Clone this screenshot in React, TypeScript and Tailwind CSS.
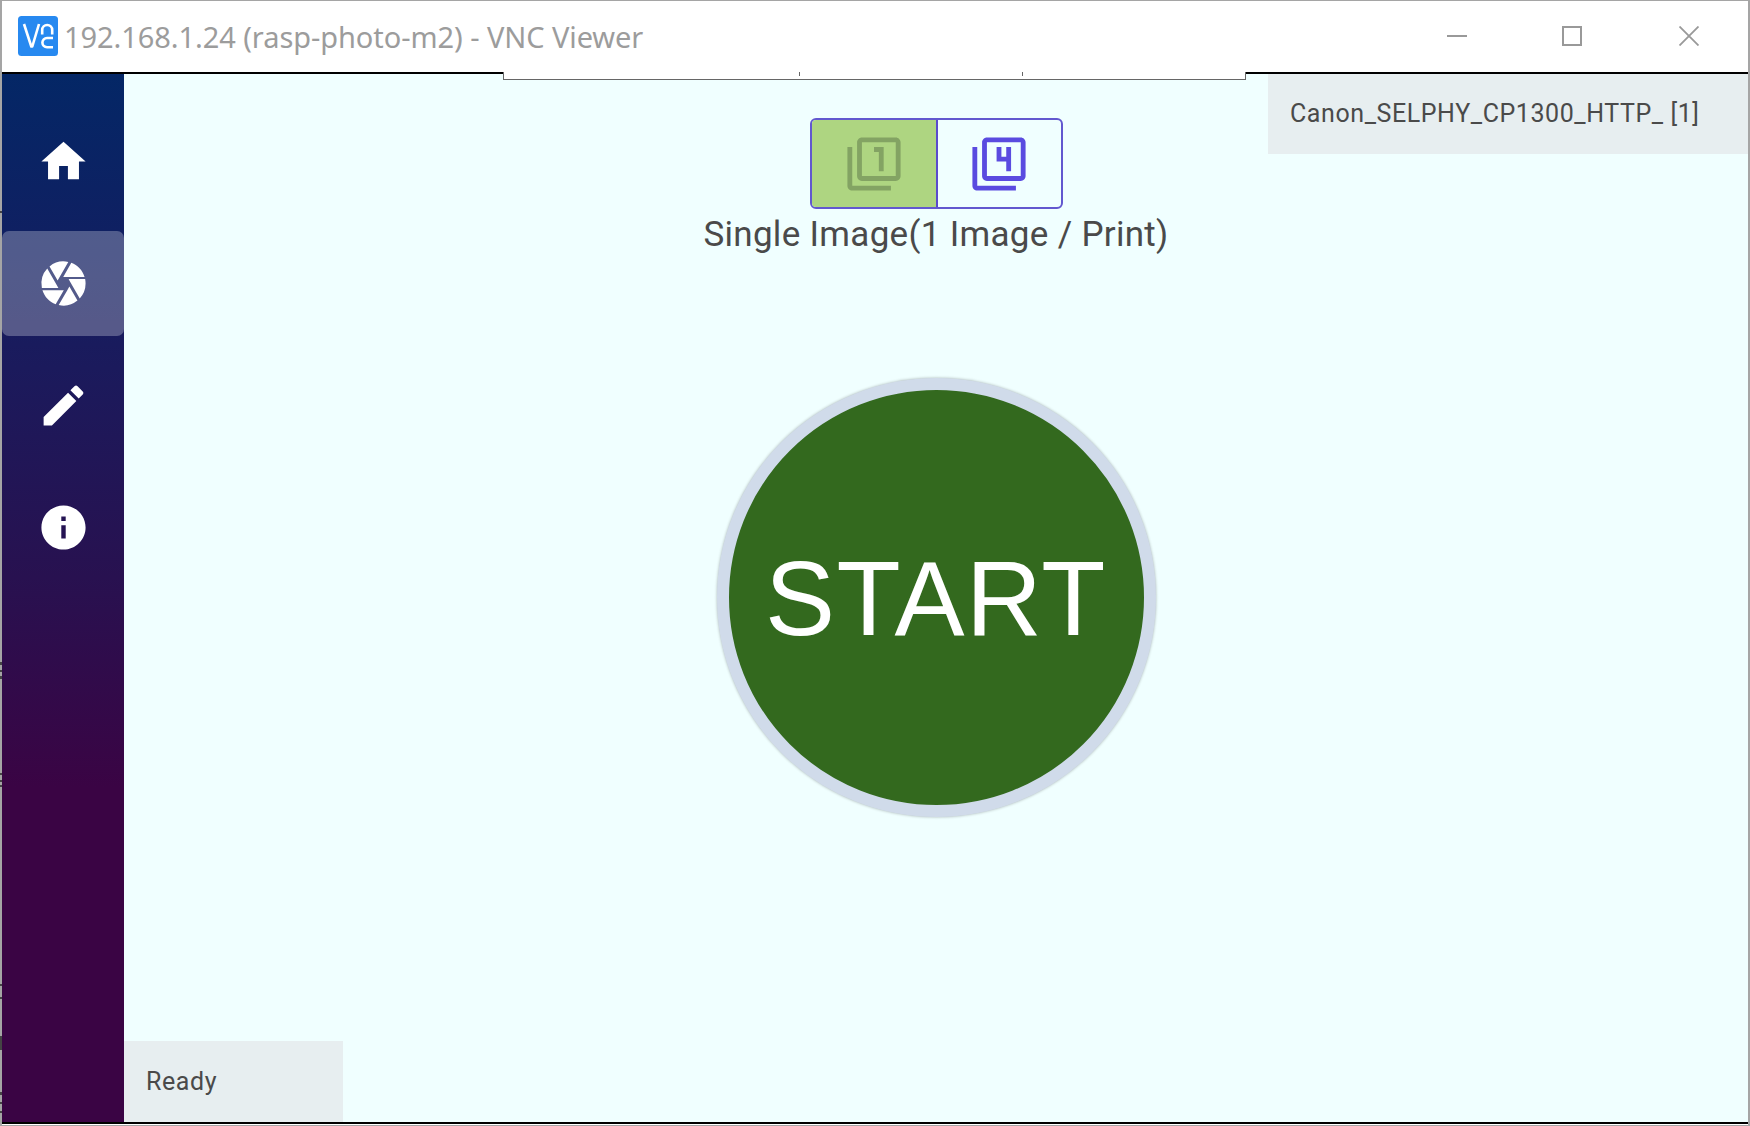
import type { ComponentType } from "react";
import { MdCamera, MdEdit, MdFilter1, MdFilter4, MdHome, MdInfo } from "react-icons/md";

function VncLogo() {
  return (
    <svg className="-mt-px block h-10 w-10 shrink-0" viewBox="0 0 40 40" fill="none">
      <rect width="40" height="40" rx="3.5" fill="#2789f0" />
      <g stroke="#fff" strokeWidth="2.6">
        <path d="M6 8l7.3 22.5h1L21 8" strokeLinejoin="round" />
        <path d="M24.2 18.5V14a5 5 0 0 1 10 0v4.5" />
        <path d="M35 22h-6a4.6 4.6 0 0 0 0 9.2h6" />
      </g>
    </svg>
  );
}

function TitleBar() {
  return (
    <header className="flex h-[71px] shrink-0 items-center bg-white pl-4">
      <VncLogo />
      <h1 className="ml-[6px] mt-[1px] flex-1 whitespace-nowrap font-['Noto_Sans',sans-serif] text-[29px] font-normal tracking-[-0.07px] text-[#9c9c9c]">
        192.168.1.24 (rasp-photo-m2) - VNC Viewer
      </h1>
      <div className="-mt-px flex w-[301px] items-center">
        <svg className="block h-5 w-5" viewBox="0 0 20 20"><path d="M0 10h20" stroke="#999" strokeWidth="2" /></svg>
        <svg className="ml-[95px] block h-5 w-5" viewBox="0 0 20 20"><path d="M1 1h18v18H1z" fill="none" stroke="#999" strokeWidth="2" /></svg>
        <svg className="ml-[97px] block h-5 w-5" viewBox="0 0 20 20"><path d="M.5.5l19 19M19.5.5l-19 19" stroke="#999" strokeWidth="1.8" /></svg>
      </div>
    </header>
  );
}

function ToolbarTab() {
  return (
    <div className="absolute left-[501px] top-[71px] flex h-2 w-[743px] border-x border-b border-[#666] bg-white">
      <span className="ml-[295px] h-[4px] w-px bg-[#666]" />
      <span className="ml-[222px] h-[4px] w-px bg-[#666]" />
    </div>
  );
}

const navItems: { label: string; Icon: ComponentType<{ size?: number }>; active?: boolean }[] = [
  { label: "Home", Icon: MdHome },
  { label: "Camera", Icon: MdCamera, active: true },
  { label: "Edit", Icon: MdEdit },
  { label: "Info", Icon: MdInfo },
];

function Sidebar() {
  return (
    <nav className="flex w-[122px] shrink-0 flex-col gap-[17px] bg-[linear-gradient(180deg,#042766_0%,#0f2062_15%,#1b1a5c_28%,#281150_48%,#3a0444_68%,#3a0444_100%)] pt-[35px] text-white">
      {navItems.map(({ label, Icon, active }) => (
        <button
          key={label}
          aria-label={label}
          className={`flex h-[105px] items-center justify-center rounded-[7px] ${active ? "bg-white/27" : ""}`}
        >
          <Icon size={53} />
        </button>
      ))}
    </nav>
  );
}

function Main() {
  return (
    <main className="relative flex flex-1 flex-col items-center bg-[#f0ffff] font-[Roboto,sans-serif] text-[#4a4a4a]">
      <div className="mt-[44px] flex h-[91px] w-[253px] overflow-hidden rounded-[6px] border-2 border-[#6258cf]">
        <button aria-label="Single image" className="flex w-[126px] items-center justify-center border-r-2 border-[#5a4bcc] bg-[#aed581] text-[#83a363]">
          <MdFilter1 size={58} />
        </button>
        <button aria-label="Four images" className="flex flex-1 items-center justify-center text-[#5a4be0]">
          <MdFilter4 size={58} />
        </button>
      </div>
      <p className="mt-[5px] whitespace-nowrap text-[35px] leading-[42px] tracking-[0.3px]">Single Image(1 Image / Print)</p>
      <button className="mt-[122px] flex h-[439px] w-[439px] shrink-0 items-center justify-center rounded-full border-[12px] border-[#d0dbea] bg-[#33691e] pt-[2px] font-['Liberation_Sans',sans-serif] text-[105px] leading-none tracking-[1.5px] text-white shadow-[0_0_3px_rgba(0,0,0,0.3)]">
        START
      </button>
      <div className="absolute right-0 top-0 flex h-20 w-[480px] items-center bg-[#e7eef0] pl-[22px] text-[25px] tracking-[0.58px]">
        <span className="-mt-px">Canon_SELPHY_CP1300_HTTP_ [1]</span>
      </div>
      <div className="absolute bottom-0 left-0 flex h-[81px] w-[219px] items-center bg-[#e7eef0] pl-[22px] text-[25px] tracking-[0.6px]">
        Ready
      </div>
    </main>
  );
}

/* Slivers of the document lying behind the window's left border. */
const edgeMarks = [
  "top-[211px] h-[2px]",
  "top-[662px] h-[3px]",
  "top-[670px] h-[2px]",
  "top-[676px] h-[3px]",
  "top-[773px] h-[2px]",
  "top-[780px] h-[2px]",
  "top-[785px] h-[2px]",
  "top-[984px] h-[2px]",
  "top-[997px] h-[2px]",
  "top-[1036px] h-[14px]",
  "top-[1092px] h-[3px]",
  "top-[1102px] h-[2px]",
  "top-[1111px] h-[2px]",
];

export default function App() {
  return (
    <div className="relative h-[1126px] w-[1750px] overflow-hidden">
      <div className="relative flex h-full w-full flex-col border-x-2 border-y border-[#a5a5a5] bg-white">
        <TitleBar />
        <div className="flex h-[1052px] shrink-0 border-y-2 border-black">
          <Sidebar />
          <Main />
        </div>
        <ToolbarTab />
      </div>
      {edgeMarks.map((mark) => (
        <span key={mark} className={`absolute left-0 w-[2px] bg-[#444] ${mark}`} />
      ))}
    </div>
  );
}
